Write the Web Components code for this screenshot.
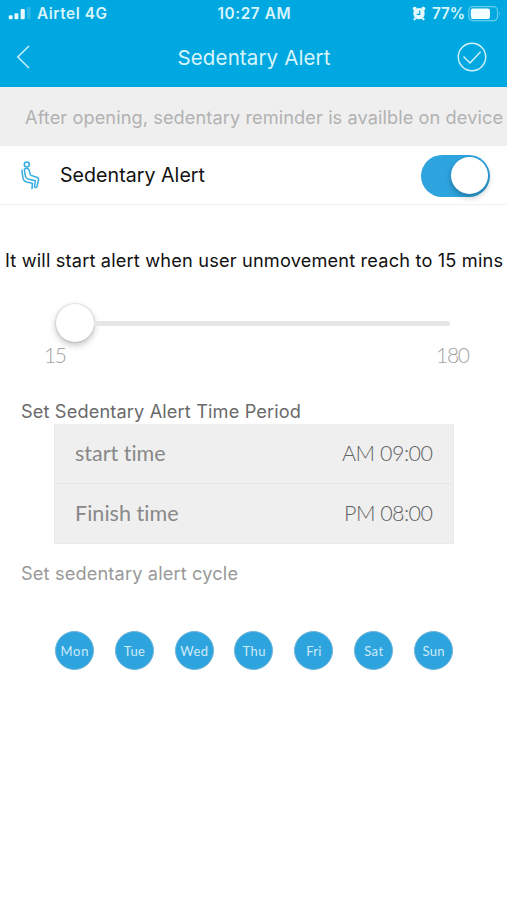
<!DOCTYPE html>
<html lang="en">
<head>
<meta charset="utf-8">
<title>Sedentary Alert</title>
<style>
  body { margin: 0; background: #fff; }
</style>
</head>
<body>
<sedentary-screen></sedentary-screen>

<script>
const define = (name, html, setup) => {
  const template = document.createElement('template');
  template.innerHTML = html.trim();
  customElements.define(name, class extends HTMLElement {
    constructor() {
      super();
      this.attachShadow({ mode: 'open' }).append(template.content.cloneNode(true));
    }
    connectedCallback() { if (setup) setup.call(this, this.shadowRoot); }
  });
};

/* A single line of text tracked out to a given width */
define('tracked-text', `
  <style>
    :host { display: block; white-space: nowrap; flex: none; }
    span { display: block; width: max-content; }
  </style>
  <span></span>`, function (root) {
  const span = root.querySelector('span');
  span.textContent = this.getAttribute('text');
  const width = Number(this.getAttribute('width'));
  const natural = span.getBoundingClientRect().width;
  span.style.letterSpacing = (width - natural) / (span.textContent.length - 1) + 'px';
  this.style.width = width + 'px';
});

define('status-bar', `
  <style>
    :host { display: grid; grid-template-columns: 1fr auto 1fr; align-items: center; height: 27px;
      padding: 0 7px 0 8px; font-size: 15.3px; font-weight: 600; color: #d9f5fc; }
    .left, .right { display: flex; align-items: center; }
    .right { justify-content: flex-end; margin-right: -1px; }
    svg { display: block; }
    .signal { margin-right: 5px; }
    .alarm { margin-right: 6px; }
    .battery { margin-left: 3px; }
  </style>
  <div class="left">
    <svg class="signal" width="24" height="13" viewBox="0 0 24 13">
      <g fill="#e9fbff"><rect x=".8" y="8.3" width="3.8" height="4" rx="1"/><rect x="6.5" y="6.3" width="3.8" height="6" rx="1"/><rect x="12.6" y="2" width="4.2" height="10.3" rx="1"/></g>
      <rect x="19" y="0" width="3.6" height="12.3" rx="1" fill="#2fb7e6"/>
    </svg>
    <tracked-text text="Airtel 4G" width="70"></tracked-text>
  </div>
  <tracked-text text="10:27 AM" width="73"></tracked-text>
  <div class="right">
    <svg class="alarm" width="14" height="15" viewBox="0 0 14 15">
      <g fill="#e4f8fe"><circle cx="7" cy="7.6" r="5.7"/><circle cx="2.7" cy="2.7" r="2"/><circle cx="11.3" cy="2.7" r="2"/><path d="M2.2 11.5 4.5 13l-2 1.6L1.2 13.5zM11.8 11.5 9.5 13l2 1.6 1.3-1.1z"/></g>
      <path d="M7.7 4.6v3.8H4.7" fill="none" stroke="#00a8e1" stroke-width="1.2"/>
    </svg>
    <tracked-text text="77%" width="33"></tracked-text>
    <svg class="battery" width="33" height="16" viewBox="0 0 33 16">
      <rect x=".7" y=".7" width="28.8" height="14" rx="4" fill="none" stroke="#66cdec" stroke-width="1.2"/>
      <rect x="2.8" y="2.6" width="19.2" height="10.4" rx="2" fill="#f4fdff"/>
      <path d="M31 5.5q1.7 2.3 0 4.6z" fill="#66cdec"/>
    </svg>
  </div>`);

define('nav-bar', `
  <style>
    :host { display: grid; grid-template-columns: 1fr auto 1fr; align-items: center; height: 60px;
      padding: 0 20px 0 16px; box-sizing: border-box; font-size: 20.5px; color: #d9f5fc; }
    svg { display: block; fill: none; stroke: #d5f3fb; }
    .title { padding: 1px 0 0 5px; }
    .done { justify-self: end; }
  </style>
  <svg width="16" height="26" viewBox="0 0 16 26" stroke-width="1.4"><path d="M13 2 1.8 13 13 24"/></svg>
  <div class="title"><tracked-text text="Sedentary Alert" width="153"></tracked-text></div>
  <svg class="done" width="30" height="30" viewBox="0 0 30 30" stroke-width="1.4"><circle cx="15" cy="15" r="13.7"/><path d="M6.5 14.6 13 20.9 23.6 9.7"/></svg>`);

define('page-notice', `
  <style>
    :host { display: flex; align-items: center; height: 59px; padding-left: 25px; background: #efefef;
      font-size: 18.2px; color: #b2b2b2; }
  </style>
  <slot></slot>`);

define('toggle-switch', `
  <style>
    :host { display: flex; justify-content: flex-end; align-items: center; box-sizing: border-box;
      width: 69px; height: 42px; padding: 2px; border-radius: 21px; background: #2ea4df; }
    i { width: 37px; height: 37px; border-radius: 50%; background: #fff; box-shadow: 0 3px 6px rgba(0,0,0,.28); }
  </style>
  <i></i>`);

define('setting-row', `
  <style>
    :host { display: flex; align-items: center; height: 58px; padding: 0 17px 0 20px;
      border-bottom: 1px solid #f0f0f0; font-size: 19.6px; color: #111; }
    svg { display: block; width: 20px; height: 30px; margin-right: 20px; }
    toggle-switch { margin-left: auto; position: relative; top: .5px; }
  </style>
  <svg viewBox="0 0 20 30" fill="none" stroke="#35ade1" stroke-width="1.5" stroke-linecap="round" stroke-linejoin="round">
    <circle cx="6.8" cy="4.6" r="2.5"/>
    <path d="M4.3 9.4q2.7-2.6 4.8.7l1.4 5 6.8 2.4q1.7.8 1.3 2.3l-1.8 7.2q-1.4 1.2-2.4-.2l.9-6-7.4-1.8q-2-.7-2.5-2.9z"/>
    <path d="M1.8 10.2l1.2 8q.6 3 3.5 3.8l5.9 1.2-.4 5.4"/>
  </svg>
  <slot></slot><toggle-switch></toggle-switch>`);

define('range-slider', `
  <style>
    :host { display: block; padding: 0 37px 0 44px; }
    .track { display: flex; align-items: center; height: 39px; margin: 0 20px 0 12px; }
    .knob { flex: none; width: 38px; height: 38px; margin-bottom: 1px; border-radius: 50%; background: #fff;
      box-shadow: 0 0 1px 1px rgba(0,0,0,.09), 0 3px 7px rgba(0,0,0,.25); }
    .line { flex: 1; height: 5px; border-radius: 0 3px 3px 0; background: #e6e6e6; }
    .limits { display: flex; justify-content: space-between; margin-bottom: 1px;
      font: 300 21px/24px Lato, sans-serif; color: #a2a2a2; }
  </style>
  <div class="track"><div class="knob"></div><div class="line"></div></div>
  <div class="limits"><tracked-text text="15" width="23"></tracked-text><tracked-text text="180" width="34"></tracked-text></div>`);

define('time-row', `
  <style>
    :host { display: flex; justify-content: space-between; align-items: center; box-sizing: border-box; height: 59px; padding: 0 20px 2px 20px; }
    :host(:not(:last-child)) { height: 60px; border-bottom: 1px solid #e6e6e6; }
  </style>
  <slot></slot>`);

define('time-table', `
  <style>
    :host { display: block; box-sizing: border-box; height: 120px; margin: 0 53px 0 54px;
      border: 1px solid #e9e9e9; border-width: 0 1px 1px; background: #efefef; font-family: Lato, sans-serif; font-size: 21.5px; color: #888; }
    .light { font-weight: 300; color: #626262; }
  </style>
  <time-row><tracked-text text="start time" width="91"></tracked-text><tracked-text class="light" text="AM 09:00" width="91"></tracked-text></time-row>
  <time-row><tracked-text text="Finish time" width="104"></tracked-text><tracked-text class="light" text="PM 08:00" width="89"></tracked-text></time-row>`);

define('day-chip', `
  <style>
    :host { display: flex; align-items: center; justify-content: center; box-sizing: border-box; width: 39px; height: 39px;
      border: 1px solid #69b4d8; border-radius: 50%; background: #2ea4df; color: #cdeaf8; font: 400 13px Lato, sans-serif; }
  </style>`, function (root) {
  const label = document.createElement('tracked-text');
  label.setAttribute('text', this.getAttribute('day'));
  label.setAttribute('width', this.getAttribute('width'));
  root.append(label);
});

define('day-picker', `
  <style>
    :host { display: flex; justify-content: space-between; padding: 0 54px 0 55px; }
  </style>
  <day-chip day="Mon" width="28"></day-chip><day-chip day="Tue" width="21"></day-chip><day-chip day="Wed" width="28"></day-chip><day-chip day="Thu" width="23"></day-chip><day-chip day="Fri" width="15"></day-chip><day-chip day="Sat" width="19"></day-chip><day-chip day="Sun" width="22"></day-chip>`);

define('sedentary-screen', `
  <style>
    :host { display: block; width: 507px; height: 900px; overflow: hidden; background: #fff; font-family: Inter, "Liberation Sans", sans-serif; }
    header { background: #00a8e1; }
    .text { font-size: 18.2px; line-height: 24px; }
    .lead { padding: 43px 0 0 5px; color: #111; }
    range-slider { padding-top: 32px; }
    .period { padding: 31px 0 1px 21px; color: #6a6a6a; }
    .cycle { padding: 17px 0 46px 21px; color: #999; }
  </style>
  <header><status-bar></status-bar><nav-bar></nav-bar></header>
  <page-notice><tracked-text text="After opening, sedentary reminder is availble on device" width="478"></tracked-text></page-notice>
  <setting-row><tracked-text text="Sedentary Alert" width="145"></tracked-text></setting-row>
  <div class="text lead"><tracked-text text="It will start alert when user unmovement reach to 15 mins" width="498"></tracked-text></div>
  <range-slider></range-slider>
  <div class="text period"><tracked-text text="Set Sedentary Alert Time Period" width="280"></tracked-text></div>
  <time-table></time-table>
  <div class="text cycle"><tracked-text text="Set sedentary alert cycle" width="217"></tracked-text></div>
  <day-picker></day-picker>`);
</script>
</body>
</html>
